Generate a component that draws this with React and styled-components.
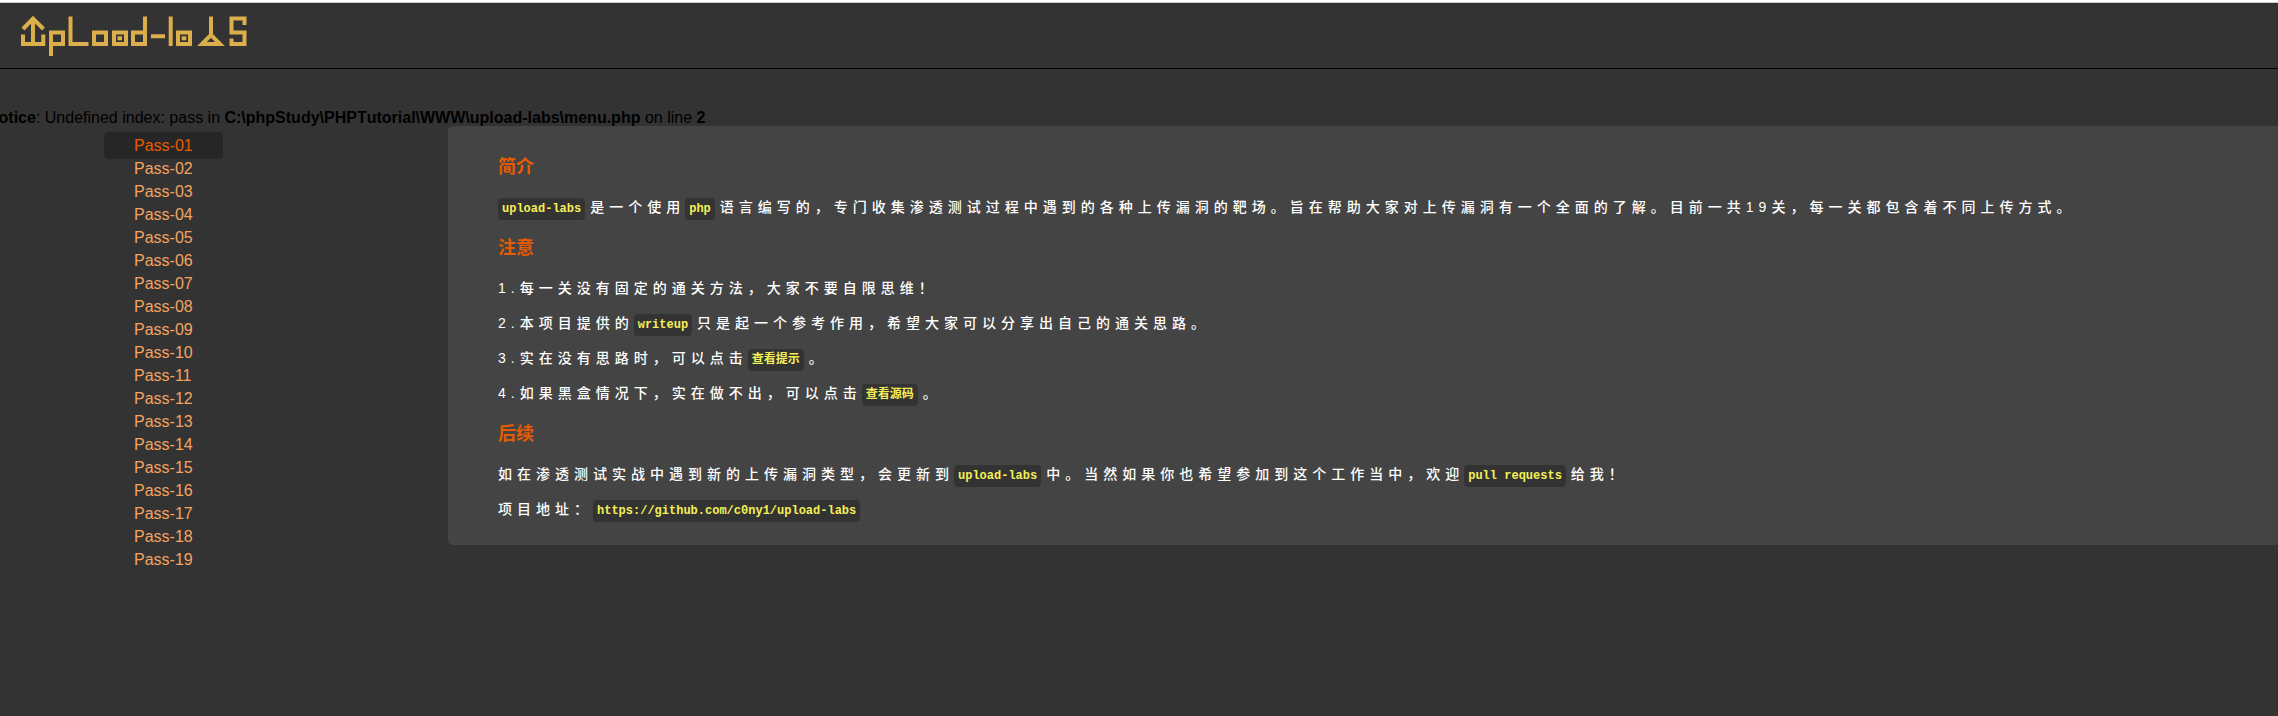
import React from "react";
import styled, { createGlobalStyle } from "styled-components";

const GlobalStyle = createGlobalStyle`
  body {
    margin: 0;
    background: #333;
    color: #000;
    font-family: "Liberation Sans", "Noto Sans CJK SC", sans-serif;
    font-size: 16px;
  }
`;

const Page = styled.div`
  min-height: 100vh;
  box-sizing: border-box;
  border-top: 2px solid #fff;
`;

const Header = styled.header`
  height: 65px;
  border-top: 1px solid #ccc;
  border-bottom: 1px solid #000;
`;

const HomeLink = styled.a`
  display: block;
  width: 280px;
`;

const LogoDrawing = styled.svg`
  display: block;
  width: 280px;
  height: 60px;
  fill: none;
  stroke: #dbb04c;
  stroke-width: 4;
`;

const Notice = styled.p`
  margin: 40px 0 -1px -13px;
  line-height: 18px;
  white-space: nowrap;
  font-kerning: none;
`;

const Main = styled.div`
  display: flex;
  align-items: flex-start;
`;

const Menu = styled.nav`
  flex: 0 0 448px;
  box-sizing: border-box;
  padding: 8px 0 0 104px;
`;

const MenuList = styled.ul`
  list-style: none;
  margin: 0;
  padding: 0;
  line-height: 23px;
`;

const PassLink = styled.a`
  padding: 5px 30px;
  border-radius: 5px;
  text-decoration: none;
  color: ${(p) => (p.$active ? "#e65c00" : "#f4a460")};
  background: ${(p) => (p.$active ? "#262626" : "transparent")};
`;

const Panel = styled.main`
  flex: 1;
  padding: 29px 50px 25px;
  border-radius: 5px 0 0 5px;
  background: #444;
`;

const Heading = styled.h3`
  margin: 18px 0;
  font-size: 18px;
  line-height: 24px;
  color: #e65c00;

  &:first-child {
    margin-top: 0;
  }
`;

const Text = styled.p`
  margin: 14px 0;
  font-size: 14px;
  font-weight: 500;
  line-height: 21px;
  letter-spacing: 5px;
  color: #fff;

  &:last-child {
    margin-bottom: 0;
  }
`;

const Code = styled.code`
  display: inline-block;
  height: 22px;
  margin: -2px 5px -2px 0;
  padding: 0 4px;
  border-radius: 4px;
  background: #333;
  color: #f5f056;
  font-family: "Liberation Mono", "Noto Sans CJK SC", monospace;
  font-size: 12px;
  font-weight: bold;
  line-height: 22px;
  letter-spacing: 0;
`;

const passes = Array.from({ length: 19 }, (_, i) => `Pass-${String(i + 1).padStart(2, "0")}`);

function Logo() {
  return (
    <LogoDrawing viewBox="0 3 280 60" role="img" aria-label="upload-labs">
      <path d="M23 29 33 18.5 43.5 29M33 18V44" />
      <path d="M23 34.5V44H43.3V34.5" />
      <path d="M51 56V32.5H63V44H51" />
      <path d="M70.5 16.5V44H88.5" />
      <path d="M94 32.5H106V44H94Z" />
      <path d="M114 32.5H126V44H114ZM117.5 38.3H122" />
      <path d="M145 16.5V44H133V32.5H145" />
      <path d="M151 36.3H165M170.7 16.5V46" />
      <path d="M178 32.5H190V44H178ZM181.7 38.3H186.3" />
      <path d="M211 16.5V35L202 44H220L211 35" />
      <path d="M244.5 25V18.5H231.5V32.5H244.5V44H231.5V38.5" />
    </LogoDrawing>
  );
}

export default function App() {
  return (
    <>
      <GlobalStyle />
      <Page>
        <Header>
          <HomeLink href="#">
            <Logo />
          </HomeLink>
        </Header>
        <Notice>
          <b>Notice</b>: Undefined index: pass in <b>{"C:\\phpStudy\\PHPTutorial\\WWW\\upload-labs\\menu.php"}</b> on line <b>2</b>
        </Notice>
        <Main>
          <Menu>
            <MenuList>
              {passes.map((name, i) => (
                <li key={name}>
                  <PassLink href={`#${name}`} $active={i === 0}>{name}</PassLink>
                </li>
              ))}
            </MenuList>
          </Menu>
          <Panel lang="zh-CN">
            <Heading>简介</Heading>
            <Text>
              <Code>upload-labs</Code>是一个使用<Code>php</Code>语言编写的，专门收集渗透测试过程中遇到的各种上传漏洞的靶场。旨在帮助大家对上传漏洞有一个全面的了解。目前一共19关，每一关都包含着不同上传方式。
            </Text>
            <Heading>注意</Heading>
            <Text>1.每一关没有固定的通关方法，大家不要自限思维！</Text>
            <Text>2.本项目提供的<Code>writeup</Code>只是起一个参考作用，希望大家可以分享出自己的通关思路。</Text>
            <Text>3.实在没有思路时，可以点击<Code>查看提示</Code>。</Text>
            <Text>4.如果黑盒情况下，实在做不出，可以点击<Code>查看源码</Code>。</Text>
            <Heading>后续</Heading>
            <Text>
              如在渗透测试实战中遇到新的上传漏洞类型，会更新到<Code>upload-labs</Code>中。当然如果你也希望参加到这个工作当中，欢迎<Code>pull requests</Code>给我！
            </Text>
            <Text>项目地址：<Code>https://github.com/c0ny1/upload-labs</Code></Text>
          </Panel>
        </Main>
      </Page>
    </>
  );
}
